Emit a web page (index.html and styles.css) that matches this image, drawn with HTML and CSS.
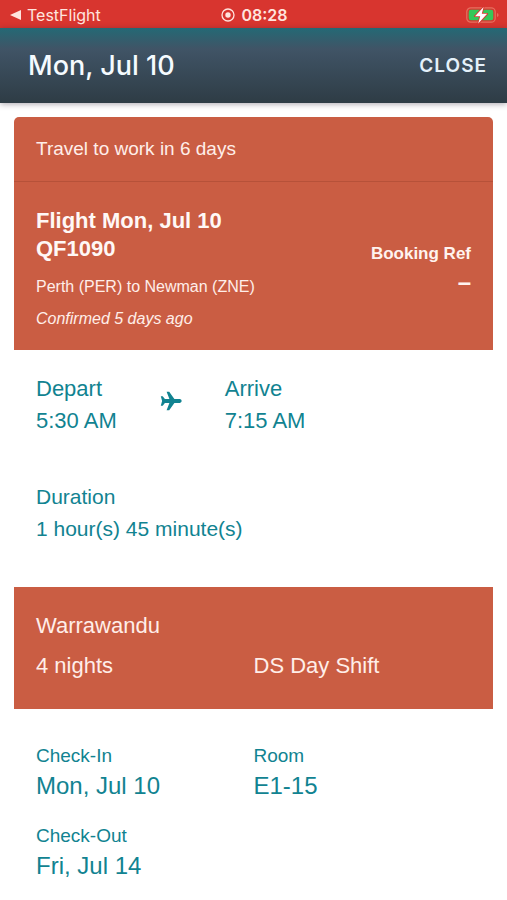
FILE: index.html
```html
<!DOCTYPE html>
<html lang="en">
<head>
<meta charset="utf-8">
<meta name="viewport" content="width=device-width, initial-scale=1">
<title>Mon, Jul 10</title>
<link rel="stylesheet" href="styles.css">
</head>
<body>
<div class="status-bar">
  <a class="back-app" href="#">
    <svg width="11" height="10" viewBox="0 0 11 10" aria-hidden="true"><path d="M0 5 11 0v10z" fill="currentColor"/></svg>
    TestFlight
  </a>
  <div class="clock">
    <svg width="14" height="14" viewBox="0 0 14 14" aria-hidden="true"><circle cx="7" cy="7" r="6" fill="none" stroke="currentColor" stroke-width="1.3"/><circle cx="7" cy="7" r="2.7" fill="currentColor"/></svg>
    <time>08:28</time>
  </div>
  <svg class="battery" width="33" height="18" viewBox="0 0 33 18" role="img" aria-label="Battery charging">
    <rect x=".8" y="1.8" width="28.4" height="14.4" rx="4" fill="none" stroke="#e5705f" stroke-width="1.2"/>
    <path d="M31 7v4q1.600-.5 1.600-2T31 7z" fill="#e5705f"/>
    <rect x="2.700" y="3.700" width="24.600" height="10.600" rx="2.200" fill="#35c759"/>
    <path d="M17.600 1 9 10.200h5.200L12.200 17.500l9-9.700h-5.400z" fill="#fff" stroke="#d8352f" stroke-width="1.800" paint-order="stroke" stroke-linejoin="round"/>
  </svg>
</div>
<header class="toolbar">
  <h1>Mon, Jul 10</h1>
  <button type="button" class="close">CLOSE</button>
</header>
<main class="card">
  <p class="notice">Travel to work in 6 days</p>
  <section class="flight">
    <div>
      <h2>Flight Mon, Jul 10<br>QF1090</h2>
      <p class="route">Perth (PER) to Newman (ZNE)</p>
      <p class="confirmed">Confirmed 5 days ago</p>
    </div>
    <div class="booking">Booking Ref<span>–</span></div>
  </section>
  <section class="times">
    <div class="legs">
      <p>Depart<br>5:30 AM</p>
      <svg class="plane" width="22" height="20" viewBox="0 0 22 20" aria-hidden="true"><path d="M20 8.100h-5.600L9.200.7H6.600l2.800 7.400H4.900L2.700 5.300H.8L2.100 10 .8 14.700h1.900l2.200-2.800h4.500l-2.800 7.400h2.600l5.200-7.400H20q1.700-.6 1.700-1.900T20 8.100z" fill="currentColor"/></svg>
      <p>Arrive<br>7:15 AM</p>
    </div>
    <p class="duration">Duration<br>1 hour(s) 45 minute(s)</p>
  </section>
  <section class="camp columns">
    <p>Warrawandu<br>4 nights</p>
    <p>DS Day Shift</p>
  </section>
  <dl class="stay columns">
    <div><dt>Check-In</dt><dd>Mon, Jul 10</dd></div>
    <div><dt>Room</dt><dd>E1-15</dd></div>
    <div><dt>Check-Out</dt><dd>Fri, Jul 14</dd></div>
  </dl>
</main>
</body>
</html>
```
FILE: styles.css
```css
* { box-sizing: border-box; }
body, h1, h2, p, dl, dd { margin: 0; }
body {
  background: #fff;
  color: #118391;
  font: 22px/32px "Liberation Sans", Arial, sans-serif;
}
.status-bar {
  display: grid;
  grid-template-columns: 1fr auto 1fr;
  align-items: center;
  height: 28px;
  padding: 1px 8px 0 10px;
  background: #d8352f;
  color: #ffe4de;
  font: 16px/24px Inter, sans-serif;
}
.back-app {
  display: flex;
  align-items: center;
  gap: 6px;
  color: inherit;
  text-decoration: none;
}
.clock {
  display: flex;
  align-items: center;
  gap: 6px;
  font-weight: 600;
}
.battery { justify-self: end; }
.toolbar {
  display: flex;
  align-items: center;
  justify-content: space-between;
  height: 75px;
  padding: 0 20px 0 28px;
  background: linear-gradient(#246975, #405466 28%, #2e3c45);
  box-shadow: 0 1px 6px rgba(40, 30, 50, .4);
  color: #f5fbff;
}
.toolbar h1 {
  font: 500 27px/32px Inter, sans-serif;
}
.close {
  padding: 0;
  border: 0;
  background: none;
  color: #e4f1fa;
  font: 600 19px/32px Inter, sans-serif;
  letter-spacing: 1px;
}
.card {
  margin: 14px;
  overflow: hidden;
  border-radius: 5px;
}
.notice, .flight, .camp {
  padding: 0 22px;
  background: #ca5d43;
  color: #ffeee9;
}
.notice {
  padding-top: 16px;
  padding-bottom: 16px;
  border-bottom: 1px solid #b65139;
  font-size: 19px;
}
.flight {
  display: flex;
  align-items: center;
  justify-content: space-between;
  padding-top: 25px;
  padding-bottom: 15px;
  font-size: 16px;
}
.flight h2 {
  margin-bottom: 8px;
  color: #fff8f6;
  font-size: 22px;
  line-height: 28px;
}
.confirmed { font-style: italic; }
.booking {
  padding-bottom: 6px;
  color: #fff3ef;
  font-size: 17px;
  font-weight: bold;
  line-height: 28px;
  text-align: right;
}
.booking span { display: block; font-size: 24px; }
.times { padding: 23px 22px 42px; }
.legs {
  display: flex;
  gap: 43px;
  margin-bottom: 44px;
}
.plane { margin-top: 18px; }
.duration { font-size: 21px; }
.columns {
  display: grid;
  grid-template-columns: 1fr 1fr;
}
.camp {
  align-items: end;
  padding-top: 19px;
  padding-bottom: 23px;
  line-height: 40px;
}
.stay {
  row-gap: 20px;
  padding: 33px 22px 0;
}
.stay dt { font-size: 19px; line-height: 28px; }
.stay dd { font-size: 24px; }
```
